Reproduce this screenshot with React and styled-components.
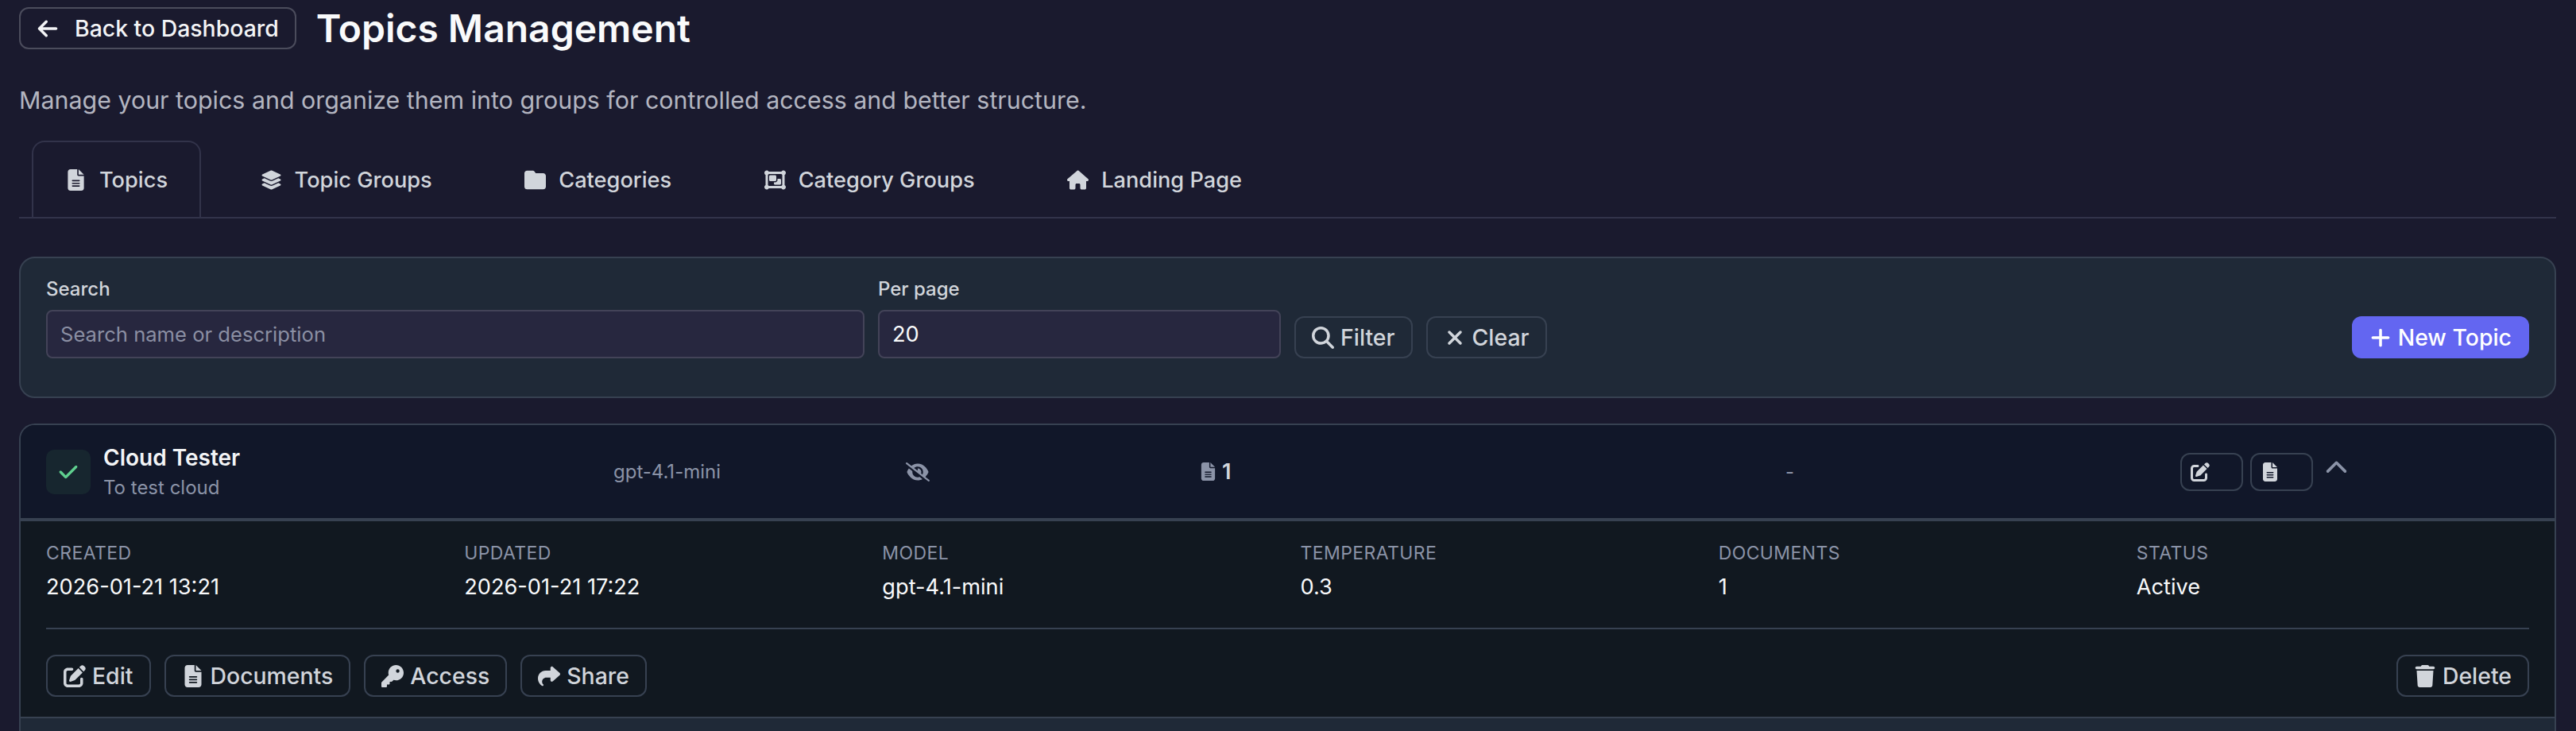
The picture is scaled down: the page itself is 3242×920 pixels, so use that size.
import styled, { createGlobalStyle } from 'styled-components';
import {
  FaArrowLeft,
  FaCheck,
  FaChevronUp,
  FaEyeSlash,
  FaFileLines,
  FaFolder,
  FaHouse,
  FaKey,
  FaLayerGroup,
  FaMagnifyingGlass,
  FaObjectGroup,
  FaPenToSquare,
  FaPlus,
  FaShare,
  FaTrash,
  FaXmark,
} from 'react-icons/fa6';

const GlobalStyle = createGlobalStyle`
  html, body {
    margin: 0;
    height: 920px;
    overflow: hidden;
    background: #1a1a2e;
  }
  * {
    box-sizing: border-box;
  }
`;

const tabs = [
  { label: 'Topics', icon: FaFileLines, active: true },
  { label: 'Topic Groups', icon: FaLayerGroup },
  { label: 'Categories', icon: FaFolder },
  { label: 'Category Groups', icon: FaObjectGroup },
  { label: 'Landing Page', icon: FaHouse },
];

const details = [
  ['Created', '2026-01-21 13:21'],
  ['Updated', '2026-01-21 17:22'],
  ['Model', 'gpt-4.1-mini'],
  ['Temperature', '0.3'],
  ['Documents', '1'],
  ['Status', 'Active'],
];

function App() {
  return (
    <Page>
      <GlobalStyle />
      <Header>
        <BackButton>
          <FaArrowLeft size={28} />
          Back to Dashboard
        </BackButton>
        <Title>Topics Management</Title>
      </Header>
      <Subtitle>
        Manage your topics and organize them into groups for controlled access and better structure.
      </Subtitle>

      <TabBar>
        {tabs.map(({ label, icon: Icon, active }) => (
          <Tab key={label} $active={active}>
            <Icon size={27} />
            {label}
          </Tab>
        ))}
      </TabBar>

      <FilterCard>
        <SearchField>
          <Label>Search</Label>
          <Input placeholder="Search name or description" readOnly />
        </SearchField>
        <PerPageField>
          <Label>Per page</Label>
          <Input value="20" readOnly />
        </PerPageField>
        <ActionButton>
          <FaMagnifyingGlass size={28} />
          Filter
        </ActionButton>
        <ActionButton>
          <FaXmark size={28} />
          Clear
        </ActionButton>
        <PrimaryButton>
          <FaPlus size={28} />
          New Topic
        </PrimaryButton>
      </FilterCard>

      <TopicCard>
        <TopicRow>
          <NameCell>
            <StatusBox>
              <FaCheck size={26} />
            </StatusBox>
            <div>
              <TopicName>Cloud Tester</TopicName>
              <TopicDesc>To test cloud</TopicDesc>
            </div>
          </NameCell>
          <Muted>gpt-4.1-mini</Muted>
          <Muted>
            <FaEyeSlash size={30} />
          </Muted>
          <DocCount>
            <FaFileLines size={23} />
            1
          </DocCount>
          <Muted>-</Muted>
          <RowActions>
            <IconButton>
              <FaPenToSquare size={24} />
            </IconButton>
            <IconButton>
              <FaFileLines size={24} />
            </IconButton>
            <Chevron>
              <FaChevronUp size={29} />
            </Chevron>
          </RowActions>
        </TopicRow>

        <Details>
          <DetailGrid>
            {details.map(([label, value]) => (
              <div key={label}>
                <DetailLabel>{label}</DetailLabel>
                <DetailValue>{value}</DetailValue>
              </div>
            ))}
          </DetailGrid>
          <DetailActions>
            <ActionButton>
              <FaPenToSquare size={28} />
              Edit
            </ActionButton>
            <ActionButton>
              <FaFileLines size={28} />
              Documents
            </ActionButton>
            <ActionButton>
              <FaKey size={28} />
              Access
            </ActionButton>
            <ActionButton>
              <FaShare size={28} />
              Share
            </ActionButton>
            <DeleteButton>
              <FaTrash size={28} />
              Delete
            </DeleteButton>
          </DetailActions>
        </Details>
        <NextRow />
      </TopicCard>
    </Page>
  );
}

const Page = styled.div`
  padding: 9px 25px 0 24px;
  font-family: Inter, 'Noto Sans', sans-serif;
  color: #f9fafb;
`;

const Header = styled.header`
  display: flex;
  align-items: center;
  gap: 25px;
`;

const BackButton = styled.button`
  display: flex;
  align-items: center;
  gap: 20px;
  height: 53px;
  padding: 0 20px;
  border: 2px solid #4b4c5c;
  border-radius: 12px;
  background: transparent;
  color: #f3f4f6;
  font: 500 28.4px Inter, sans-serif;
`;

const Title = styled.h1`
  margin: 0;
  font-size: 48px;
  font-weight: 600;
  line-height: 53px;
  color: #f9fafb;
`;

const Subtitle = styled.p`
  margin: 44px 0 0;
  font-size: 30.4px;
  line-height: 40px;
  color: #b3b5c0;
`;

const TabBar = styled.nav`
  display: flex;
  gap: 32.5px;
  height: 98px;
  margin-top: 31px;
  padding-left: 16px;
  border-bottom: 2px solid #32334a;
`;

const Tab = styled.div`
  display: flex;
  align-items: center;
  gap: 16px;
  height: 96px;
  padding: 0 40px;
  border: 2px solid ${({ $active }) => ($active ? '#32334a' : 'transparent')};
  border-bottom: 0;
  border-radius: 16px 16px 0 0;
  color: #d1d5db;
  font-size: 27.2px;
  font-weight: 500;
`;

const FilterCard = styled.section`
  display: flex;
  align-items: flex-end;
  gap: 17px;
  height: 178px;
  margin-top: 48px;
  padding: 0 32px 48px;
  border: 2px solid #374151;
  border-radius: 20px;
  background: #1f2937;
`;

const SearchField = styled.div`
  width: 1030px;
`;

const PerPageField = styled.div`
  width: 507px;
`;

const Label = styled.label`
  display: block;
  margin-bottom: 10px;
  font-size: 24px;
  font-weight: 500;
  line-height: 32px;
  color: #d1d5db;
`;

const Input = styled.input`
  display: block;
  width: 100%;
  height: 61px;
  padding: 0 16px;
  border: 2px solid #434358;
  border-radius: 8px;
  background: #27273f;
  color: #f9fafb;
  font: 400 27.2px Inter, sans-serif;
  outline: none;

  &::placeholder {
    color: #8b8fa3;
    font-size: 25.6px;
  }
`;

const ActionButton = styled.button`
  display: flex;
  align-items: center;
  gap: 8px;
  height: 53px;
  padding: 0 20px;
  border: 2px solid #374151;
  border-radius: 12px;
  background: transparent;
  color: #d1d5db;
  font: 500 28.4px Inter, sans-serif;
  white-space: nowrap;
`;

const PrimaryButton = styled(ActionButton)`
  margin-left: auto;
  padding: 0 22px;
  border: 0;
  background: #6366f1;
  color: #fff;
`;

const DeleteButton = styled(ActionButton)`
  margin-left: auto;
`;

const TopicCard = styled.section`
  margin-top: 32px;
  border: 2px solid #374151;
  border-bottom: 0;
  border-radius: 20px 20px 0 0;
  overflow: hidden;
`;

const TopicRow = styled.div`
  display: grid;
  grid-template-columns: 714px 368px 369px 738px 497px 1fr;
  align-items: center;
  height: 121px;
  padding-left: 32px;
  border-bottom: 4px solid #374151;
  background: #111729;
`;

const NameCell = styled.div`
  display: flex;
  align-items: center;
  gap: 16px;
`;

const StatusBox = styled.div`
  display: flex;
  align-items: center;
  justify-content: center;
  width: 56px;
  height: 56px;
  border-radius: 10px;
  background: #17262f;
  color: #5fd08f;
`;

const TopicName = styled.div`
  font-size: 28px;
  font-weight: 600;
  line-height: 36px;
  color: #f3f4f6;
`;

const TopicDesc = styled.div`
  margin-top: 4px;
  font-size: 24px;
  line-height: 32px;
  color: #8b93a7;
`;

const Muted = styled.div`
  display: flex;
  align-items: center;
  font-size: 24px;
  color: #8b93a7;
`;

const DocCount = styled.div`
  display: flex;
  align-items: center;
  gap: 6px;
  font-size: 27.2px;
  font-weight: 600;
  color: #d1d5db;

  svg {
    color: #8b93a7;
  }
`;

const RowActions = styled.div`
  display: flex;
  align-items: flex-start;
  gap: 9px;
`;

const IconButton = styled.button`
  display: flex;
  align-items: center;
  justify-content: center;
  width: 79px;
  height: 48px;
  padding: 0 30px 0 0;
  border: 2px solid #374151;
  border-radius: 12px;
  background: transparent;
  color: #d1d5db;
`;

const Chevron = styled.span`
  display: block;
  margin: 5px 0 0 6px;
  color: #8b93a7;
`;

const Details = styled.div`
  height: 246px;
  padding: 24px 32px 0;
  background: #111820;
`;

const DetailGrid = styled.div`
  display: grid;
  grid-template-columns: repeat(6, 1fr);
  gap: 32px;
  height: 112px;
  border-bottom: 2px solid #374151;
`;

const DetailLabel = styled.div`
  font-size: 23px;
  line-height: 32px;
  letter-spacing: 0.4px;
  text-transform: uppercase;
  color: #8b93a7;
`;

const DetailValue = styled.div`
  margin-top: 9px;
  font-size: 27.2px;
  line-height: 36px;
  color: #f9fafb;
`;

const DetailActions = styled.div`
  display: flex;
  gap: 17px;
  margin-top: 32px;
`;

const NextRow = styled.div`
  height: 20px;
  border-top: 2px solid #374151;
  background: #1f2937;
`;

export default App;
